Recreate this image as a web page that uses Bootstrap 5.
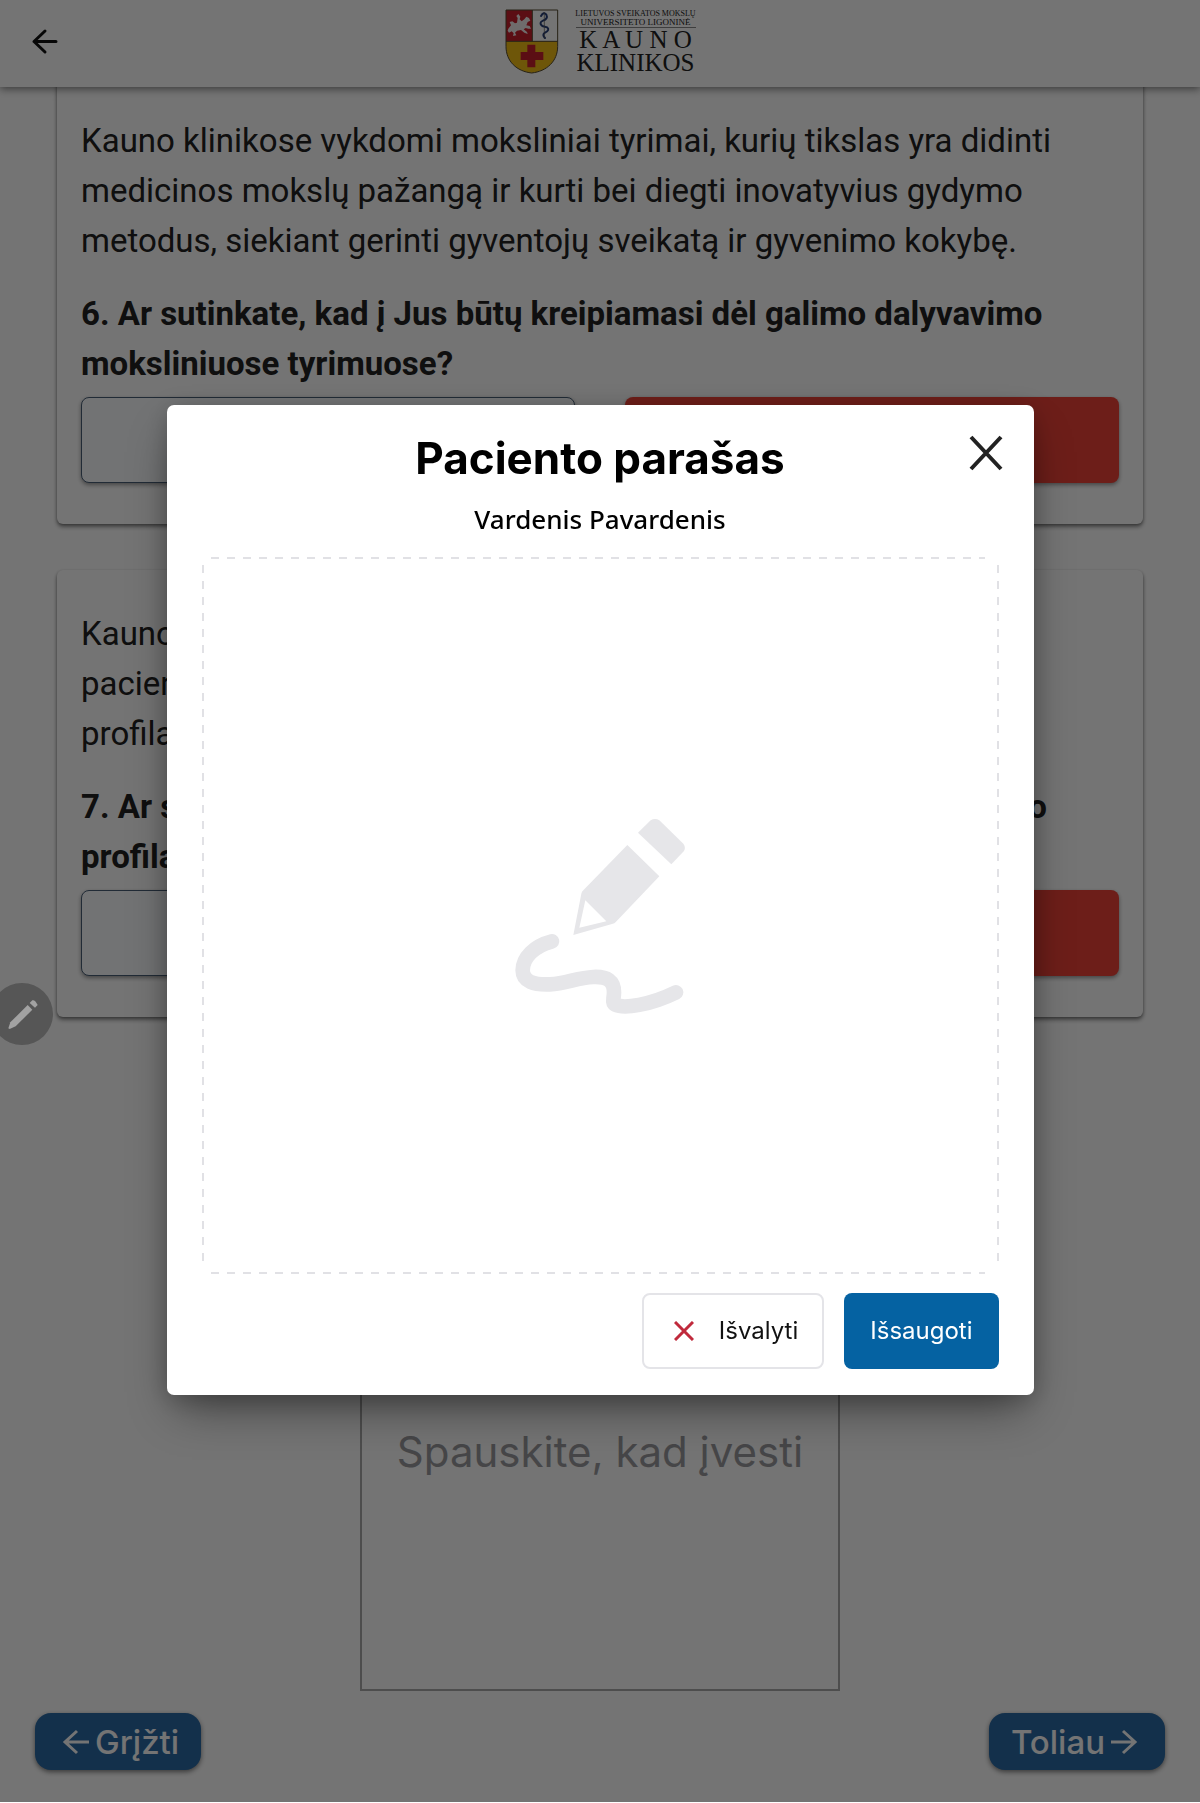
<!DOCTYPE html>
<html lang="lt">
<head>
<meta charset="utf-8">
<meta name="viewport" content="width=device-width, initial-scale=1">
<title>Paciento parašas</title>
<link href="https://cdn.jsdelivr.net/npm/bootstrap@5.3.0/dist/css/bootstrap.min.css" rel="stylesheet">
<style>
  body { font-family: Roboto, sans-serif; background: #fff; color: #212121; }
  .page { min-height: 100vh; }
  .topbar { height: 87px; background: #fff; box-shadow: 0 2px 8px rgba(0,0,0,.5); z-index: 2; padding: 0 31px; }
  .topbar .back { left: 31px; top: 28px; }
  .brand-words { font-family: "Liberation Serif", serif; color: #222; width: 120px; padding-top: 1px; white-space: nowrap; }
  .brand-small { font-size: 8px; line-height: 9px; }
  .brand-small-2 { font-size: 9px; line-height: 9px; border-bottom: 1px solid #888; }
  .brand-big { font-size: 25px; line-height: 23px; }
  .questions { padding: 0 57px; margin-top: -10px; gap: 46px; }
  .q-card { border-radius: 6px; background: #fff; padding: 39px 24px 41px; box-shadow: 0 3px 4px rgba(0,0,0,.4), 0 1px 3px rgba(0,0,0,.25); font-size: 33px; line-height: 50px; }
  .q-card p { margin: 0 0 23px; }
  .q-card h2 { font-size: 33px; line-height: 50px; font-weight: 700; margin: 0 0 8px; }
  .q-tail { padding-right: 72px; }
  .q-answers { gap: 50px; }
  .q-btn { height: 86px; border-radius: 8px; font-size: 28px; box-shadow: 0 2px 4px rgba(0,0,0,.4); }
  .q-yes, .q-yes:hover { border: 1px solid #4a6078; background: #fbfcff; }
  .q-no, .q-no:hover { background: #f04238; color: #fff; }
  .sign-box { width: 40%; aspect-ratio: 1; margin: 194px auto 0; border: 2px solid #aaa; background: transparent; font-family: Inter, sans-serif; font-size: 42px; color: #9b9b9e; }
  .footer-nav { padding: 22px 35px 33px; }
  .nav-btn, .nav-btn:hover { height: 57px; border-radius: 16px; background: #2a6aa6; color: #fff; font-family: Inter, sans-serif; font-weight: 500; font-size: 33px; line-height: 40px; box-shadow: 0 2px 5px rgba(0,0,0,.5); padding: 0 22px 0 27px; gap: 5px; }
  .nav-next, .nav-next:hover { padding: 0 27px 0 22px; }
  .shade { inset: 0 0 1px; background: rgba(0,0,0,.545); z-index: 10; }
  .pen-bubble { left: -9px; top: 983px; width: 62px; height: 62px; border-radius: 50%; background: #565656; z-index: 12; border: 0; padding: 0; }
  .sign-dialog { max-width: 867px; min-height: calc(100vh - 3px); }
  .sign-content { border: 0; border-radius: 7px; padding: 27px 35px 26px; box-shadow: 0 22px 44px -10px rgba(0,0,0,.45), 0 4px 24px rgba(0,0,0,.2); color: #000; }
  .sign-title { font-family: Inter, sans-serif; font-weight: 700; font-size: 44px; line-height: 52px; margin: 0; }
  .sign-name { font-family: "Noto Sans", sans-serif; font-weight: 500; font-size: 26px; line-height: 36px; margin: 17px 0 20px; }
  .sign-close { right: 30px; top: 30px; }
  .sign-pad { height: 717px; }
  .pad-frame { inset: 0; width: 100%; height: 100%; }
  .sign-actions { margin-top: 19px; gap: 20px; }
  .act { height: 76px; border-radius: 8px; font-family: Inter, sans-serif; font-size: 24px; }
  .act-clear { border: 2px solid #e4e4e8; padding: 0 24px 0 30px; gap: 25px; color: #111; }
  .act-save, .act-save:hover { background: #0562a2; color: #fff; padding: 0 26px; }
</style>
<script src="https://cdn.jsdelivr.net/npm/bootstrap@5.3.0/dist/js/bootstrap.bundle.min.js"></script>
</head>
<body>
<div class="page d-flex flex-column position-relative overflow-hidden">
  <header class="topbar position-relative d-flex justify-content-center align-items-start flex-shrink-0">
    <button class="back btn p-0 border-0 position-absolute d-flex" aria-label="Atgal">
      <svg width="28" height="27" viewBox="0 0 28 27" fill="none" stroke="#111" stroke-width="3" stroke-linecap="round" stroke-linejoin="round"><path d="M25 13.500H3M14 3L3 13.500L14 24"/></svg>
    </button>
    <div class="d-flex pt-2 gap-3">
      <svg width="55" height="68" viewBox="0 0 165 204">
        <clipPath id="shield"><path d="M3 6H158V115C158 160 125 190 80 195C35 190 3 160 3 115Z"/></clipPath>
        <g clip-path="url(#shield)">
          <path fill="#c8202c" d="M0 0H82V100H0Z"/><path fill="#fff" d="M82 0H165V100H82Z"/><path fill="#f2bd14" d="M0 100H165V204H0Z"/>
          <path fill="#c8202c" d="M67 110H91V132H115V156H91V178H67V156H47V132H67Z"/>
        </g>
        <path fill="#f4eeee" d="M10 62L18 52L14 42L22 40L30 46L36 44L38 30L34 24L40 18L46 26L44 34L50 40L58 34L64 26L72 30L76 38L68 42L64 52L74 54L78 62L70 62L62 60L56 64L66 72L68 78L58 74L48 66L36 68L30 74L34 82L24 84L26 76L20 70L12 74L8 68Z"/>
        <path fill="none" stroke="#29407a" stroke-width="6" stroke-linecap="round" d="M108 24Q116 10 124 20Q130 32 114 38Q100 44 112 54L126 58Q136 66 120 74Q110 80 120 90"/>
        <path stroke="#555" stroke-width="2" d="M118 12V92"/>
        <path fill="none" stroke="#554a30" stroke-width="3" d="M3 6H158V115C158 160 125 190 80 195C35 190 3 160 3 115ZM3 100H158M82 6V100"/>
      </svg>
      <div class="brand-words d-flex flex-column align-items-center">
        <div class="brand-small">LIETUVOS SVEIKATOS MOKSLŲ</div>
        <div class="brand-small-2 w-100 text-center">UNIVERSITETO LIGONINĖ</div>
        <div class="brand-big">K A U N O</div>
        <div class="brand-big">KLINIKOS</div>
      </div>
    </div>
  </header>

  <main class="questions d-flex flex-column">
    <section class="q-card">
      <p>Kauno klinikose vykdomi moksliniai tyrimai, kurių tikslas yra didinti medicinos mokslų pažangą ir kurti bei diegti inovatyvius gydymo metodus, siekiant gerinti gyventojų sveikatą ir gyvenimo kokybę.</p>
      <h2>6. Ar sutinkate, kad į Jus būtų kreipiamasi dėl galimo dalyvavimo moksliniuose tyrimuose?</h2>
      <div class="q-answers d-flex">
        <button class="q-btn q-yes btn w-50" aria-label="Taip"></button>
        <button class="q-btn q-no btn w-50" aria-label="Ne"></button>
      </div>
    </section>
    <section class="q-card">
      <p>Kauno<br>pacien<br>profila</p>
      <h2><span class="d-flex justify-content-between"><span>7. Ar s</span><span class="q-tail">o</span></span>profila</h2>
      <div class="q-answers d-flex">
        <button class="q-btn q-yes btn w-50" aria-label="Taip"></button>
        <button class="q-btn q-no btn w-50" aria-label="Ne"></button>
      </div>
    </section>
  </main>

  <button class="sign-box">Spauskite, kad įvesti</button>

  <footer class="footer-nav d-flex justify-content-between mt-auto">
    <button class="nav-btn btn d-flex align-items-center border-0">
      <svg width="28" height="26" viewBox="0 0 28 26" fill="none" stroke="#fff" stroke-width="3"><path d="M27 13H3M15 2L3 13L15 24"/></svg>Grįžti</button>
    <button class="nav-btn nav-next btn d-flex align-items-center border-0">Toliau<svg width="28" height="26" viewBox="0 0 28 26" fill="none" stroke="#fff" stroke-width="3"><path d="M1 13H25M13 2L25 13L13 24"/></svg></button>
  </footer>

  <div class="shade position-absolute"></div>
  <button class="pen-bubble position-absolute" aria-label="Rašiklis">
    <svg width="62" height="62" viewBox="0 0 186 186" fill="#a2a2a2"><path d="M52 136L58 118L110 66L124 80L74 130L56 138Z"/><path d="M116 60L124 52Q130 50 134 56L140 66L132 74Z"/></svg>
  </button>
</div>

<div class="modal d-block" tabindex="-1" role="dialog" aria-labelledby="signTitle">
  <div class="sign-dialog modal-dialog modal-dialog-centered my-0">
    <div class="sign-content modal-content">
      <h1 id="signTitle" class="sign-title text-center">Paciento parašas</h1>
      <button class="sign-close btn p-0 border-0 position-absolute d-flex" aria-label="Uždaryti">
        <svg width="36" height="36" viewBox="0 0 36 36" stroke="#222" stroke-width="4"><path d="M3 2L33 34M33 2L3 34"/></svg>
      </button>
      <p class="sign-name text-center">Vardenis Pavardenis</p>
      <div class="sign-pad position-relative d-flex justify-content-center align-items-center">
        <svg class="pad-frame position-absolute" stroke="#e1e1e5" stroke-width="2" stroke-dasharray="8 8">
          <svg x="9" width="98%" height="100%"><path d="M0 1H774"/></svg>
          <svg x="9" y="715" width="98%" height="2"><path d="M0 1H774"/></svg>
          <svg y="8" width="2" height="700"><path d="M1 0V700"/></svg>
          <svg x="100%" y="8" width="2" height="700" overflow="visible"><path d="M-1 0V700"/></svg>
        </svg>
        <svg width="220" height="250" viewBox="0 0 660 750" fill="#e6e6e9">
          <path fill-rule="evenodd" d="M412 162L508 256L378 392Q374 397 366 399L250 432L274 308Q275 302 280 298ZM286 328L268 410L349 391Z"/>
          <path d="M444 125L482 88Q495 80 508 88L580 158Q588 168 582 180L544 220Z"/>
          <path fill="none" stroke="#e6e6e9" stroke-width="44" stroke-linecap="round" stroke-linejoin="round" d="M186 451C132 465 98 500 98 538C98 572 132 582 180 580C230 577 262 560 310 558C352 556 372 570 372 604C372 626 364 634 376 641C402 654 480 642 558 604"/>
        </svg>
      </div>
      <div class="sign-actions d-flex justify-content-end">
        <button class="act act-clear btn d-flex align-items-center">
          <svg width="20" height="20" viewBox="0 0 20 20" stroke="#c02a3c" stroke-width="3"><path d="M1 1L19 19M19 1L1 19"/></svg>Išvalyti</button>
        <button class="act act-save btn border-0">Išsaugoti</button>
      </div>
    </div>
  </div>
</div>
</body>
</html>
